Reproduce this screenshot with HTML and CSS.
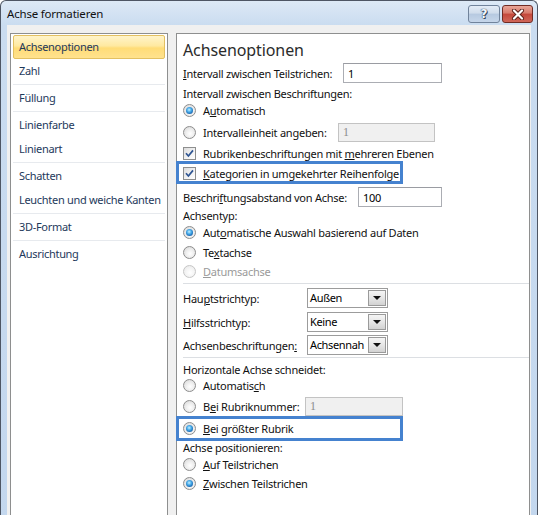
FILE: index.html
```html
<!DOCTYPE html>
<html lang="de">
<head>
<meta charset="utf-8">
<title>Achse formatieren</title>
<link rel="stylesheet" href="styles.css">
</head>
<body>
<div class="window">
  <div class="titlebar">
    <span class="title">Achse formatieren</span>
    <div class="caption-buttons">
      <div class="cb help"><span>?</span></div>
      <div class="cb close">
        <svg width="14" height="11" viewBox="0 0 14 11">
          <path d="M3 1.5 L11 9.5 M11 1.5 L3 9.5" stroke="#5a1f18" stroke-width="4" stroke-linecap="round"/>
          <path d="M3 1.5 L11 9.5 M11 1.5 L3 9.5" stroke="#ffffff" stroke-width="2.2" stroke-linecap="round"/>
        </svg>
      </div>
    </div>
  </div>
  <div class="client">
    <ul class="nav">
      <li class="selected">Achsenoptionen</li>
      <li>Zahl</li>
      <li class="sep"></li>
      <li>Füllung</li>
      <li class="sep"></li>
      <li>Linienfarbe</li>
      <li>Linienart</li>
      <li class="sep"></li>
      <li>Schatten</li>
      <li>Leuchten und weiche Kanten</li>
      <li class="sep"></li>
      <li>3D-Format</li>
      <li class="sep"></li>
      <li>Ausrichtung</li>
    </ul>
    <div class="pane">
      <h1 class="heading">Achsenoptionen</h1>

      <div class="row ctl mt1">
        <span class="label w160"><u>I</u>ntervall zwischen Teilstrichen:</span>
        <div class="field w99">1</div>
      </div>
      <div class="row mt2"><span class="label">Intervall zwischen Beschriftungen:</span></div>
      <div class="row mt1"><span class="radio on"></span><span class="label">A<u>u</u>tomatisch</span></div>
      <div class="row ctl19 mt5">
        <span class="radio"></span><span class="label w135">Intervalleinheit an<u>g</u>eben:</span>
        <div class="field disabled w97">1</div>
      </div>
      <div class="row mt3"><span class="check on"><svg width="11" height="11" viewBox="0 0 11 11"><path d="M2 5.2 L4.4 8 L9 2.4" fill="none" stroke="#2f5592" stroke-width="1.7"/></svg></span><span class="label">Rubrikenbeschriftungen mit <u>m</u>ehreren Ebenen</span></div>
      <div class="row mt4"><span class="check on"><svg width="11" height="11" viewBox="0 0 11 11"><path d="M2 5.2 L4.4 8 L9 2.4" fill="none" stroke="#2f5592" stroke-width="1.7"/></svg></span><span class="label"><u>K</u>ategorien in umgekehrter Reihenfolge</span></div>
      <div class="row ctl mt6">
        <span class="label w175">Beschri<u>f</u>tungsabstand von Achse:</span>
        <div class="field w84">100</div>
      </div>
      <div class="row mt0"><span class="label">Achsentyp:</span></div>
      <div class="row mt1"><span class="radio on"></span><span class="label">Aut<u>o</u>matische Auswahl basierend auf Daten</span></div>
      <div class="row mt4"><span class="radio"></span><span class="label">Te<u>x</u>tachse</span></div>
      <div class="row mt3"><span class="radio disabled"></span><span class="label dim"><u>D</u>atumsachse</span></div>

      <div class="hr mt4"></div>

      <div class="row ctl mt4">
        <span class="label w124">Hau<u>p</u>tstrichtyp:</span>
        <div class="combo"><span class="value">Außen</span><span class="btn"><i class="tri"></i></span></div>
      </div>
      <div class="row ctl mt4">
        <span class="label w124"><u>H</u>ilfsstrichtyp:</span>
        <div class="combo"><span class="value">Keine</span><span class="btn"><i class="tri"></i></span></div>
      </div>
      <div class="row ctl mt3">
        <span class="label w124">Achsenbeschriftungen<u>:</u></span>
        <div class="combo"><span class="value">Achsennah</span><span class="btn"><i class="tri"></i></span></div>
      </div>

      <div class="hr mt2"></div>

      <div class="row mt3"><span class="label">Horizontale Achse schneidet:</span></div>
      <div class="row mt0"><span class="radio"></span><span class="label">Automatis<u>c</u>h</span></div>
      <div class="row ctl19 mt4">
        <span class="radio"></span><span class="label w102">B<u>e</u>i Rubriknummer:</span>
        <div class="field disabled w98">1</div>
      </div>
      <div class="row mt4"><span class="radio on"></span><span class="label"><u>B</u>ei größter Rubrik</span></div>
      <div class="row mt3"><span class="label">Achse positionieren:</span></div>
      <div class="row mt1"><span class="radio"></span><span class="label"><u>A</u>uf Teilstrichen</span></div>
      <div class="row mt3"><span class="radio on"></span><span class="label"><u>Z</u>wischen Teilstrichen</span></div>

      <div class="mark mark-1"></div>
      <div class="mark mark-2"></div>
    </div>
  </div>
</div>
</body>
</html>
```

FILE: styles.css
```css
html, body {
  margin: 0;
  padding: 0;
}
body {
  width: 538px;
  height: 515px;
  overflow: hidden;
  background: #ffffff;
  font-family: "Noto Sans", "Open Sans", sans-serif;
  font-size: 11px;
  letter-spacing: -0.25px;
  color: #000;
}

.window {
  box-sizing: border-box;
  width: 538px;
  height: 540px;
  border: 1px solid #4e5664;
  border-bottom: none;
  border-radius: 6px 6px 0 0;
  background: linear-gradient(180deg, #dde9f6 0, #cadcf0 24px, #c3d7ee 100%);
  padding: 0 6px;
  display: flex;
  flex-direction: column;
}

.titlebar {
  flex: none;
  height: 24px;
  display: flex;
  justify-content: space-between;
  align-items: flex-start;
}
.title {
  font-size: 11.5px;
  letter-spacing: -0.2px;
  line-height: 14px;
  margin-top: 6px;
  color: #111;
}
.caption-buttons {
  display: flex;
  gap: 2px;
  margin-top: 4px;
  margin-right: -2px;
}
.cb {
  box-sizing: border-box;
  height: 18px;
  border-radius: 3px;
  display: flex;
  align-items: center;
  justify-content: center;
}
.help {
  width: 32px;
  border: 1px solid #71839b;
  background: linear-gradient(180deg, #e4ecf6 0, #cfdceb 45%, #b6c9e0 50%, #c6d6ea 100%);
}
.help span {
  font-family: "DejaVu Sans", sans-serif;
  font-weight: bold;
  font-size: 12px;
  letter-spacing: 0;
  color: #f4f7fb;
  text-shadow: 0 0 1px #30405a, 0 0 1px #30405a, 1px 1px 0 #3a4a62;
  line-height: 14px;
}
.close {
  width: 31px;
  border: 1px solid #6f2b23;
  background: linear-gradient(180deg, #e8a597 0, #d7796a 45%, #c4473a 50%, #d06658 100%);
}

.client {
  flex: 1;
  background: #f0f0f0;
  display: grid;
  grid-template-columns: 158px 354px;
  column-gap: 8px;
  padding: 8px 1px 0 3px;
}

/* left navigation list */
.nav {
  list-style: none;
  margin: 0;
  padding: 0 1px;
  border: 1px solid #8e8f8f;
  background: #fff;
  letter-spacing: -0.3px;
}
.nav li {
  box-sizing: border-box;
  height: 24px;
  line-height: 24px;
  padding-left: 7px;
  color: #1e395b;
  white-space: nowrap;
}
.nav li.selected {
  margin: 1px 1px 0;
  padding-left: 5px;
  line-height: 22px;
  border: 1px solid #e3c061;
  border-radius: 2px;
  background: linear-gradient(180deg, #fff4cb 0, #ffe9a0 45%, #ffdc77 55%, #ffe28e 100%);
}
.nav li.sep {
  height: 1px;
  margin: 1px 1px;
  padding: 0;
  background: #e7eaee;
}

/* right pane */
.pane {
  position: relative;
  border: 1px solid #8e8f8f;
  background: #fff;
  padding: 0 0 0 6px;
}
.heading {
  margin: 4px 0 0;
  height: 24px;
  line-height: 24px;
  font-size: 16px;
  letter-spacing: -0.1px;
  font-weight: normal;
  color: #2b2b2b;
}

.row {
  display: flex;
  align-items: center;
  height: 16px;
  white-space: nowrap;
}
.row.ctl { height: 20px; }
.row.ctl19 { height: 19px; }

.mt0 { margin-top: 0; }
.mt1 { margin-top: 1px; }
.mt2 { margin-top: 2px; }
.mt3 { margin-top: 3px; }
.mt4 { margin-top: 4px; }
.mt5 { margin-top: 5px; }
.mt6 { margin-top: 6px; }

.label { flex: none; color: #111; }
.label.dim { color: #9a9a9a; }
u { text-underline-offset: 1px; }

.w160 { width: 160px; }
.w135 { width: 135px; }
.w175 { width: 175px; }
.w124 { width: 124px; }
.w102 { width: 102px; }
.w99 { width: 99px; }
.w97 { width: 97px; }
.w84 { width: 84px; }
.w98 { width: 98px; }

/* radio buttons */
.radio {
  flex: none;
  position: relative;
  box-sizing: border-box;
  width: 13px;
  height: 13px;
  margin-right: 7px;
  border-radius: 50%;
  border: 1px solid #8d8d8d;
  background: radial-gradient(circle at 55% 60%, #ffffff 0, #f2f2f2 35%, #d4d4d4 100%);
}
.radio.on::after {
  content: "";
  position: absolute;
  left: 2px;
  top: 2px;
  width: 7px;
  height: 7px;
  border-radius: 50%;
  background: radial-gradient(circle at 45% 40%, #c9f0ff 0, #4fb1ec 35%, #1b6db8 70%, #0f3f78 100%);
}
.radio.disabled {
  border-color: #c6c6c6;
  background: radial-gradient(circle at 55% 60%, #ffffff 0, #f6f6f6 40%, #e6e6e6 100%);
}

/* checkboxes */
.check {
  flex: none;
  box-sizing: border-box;
  width: 13px;
  height: 13px;
  margin-right: 7px;
  border: 1px solid #8e8f8f;
  background: linear-gradient(135deg, #dcdcdc 0, #f4f4f4 60%, #ffffff 100%);
  display: flex;
  align-items: center;
  justify-content: center;
}
.check svg { display: block; }

/* text fields */
.field {
  flex: none;
  box-sizing: border-box;
  height: 100%;
  border: 1px solid #abadb3;
  border-top-color: #9a9ca2;
  background: #fff;
  padding: 0 4px;
  display: flex;
  align-items: center;
  color: #000;
}
.field.disabled {
  background: #f0f0f0;
  border-color: #c3c3c3;
  color: #8c8c8c;
  font-family: "Liberation Serif", serif;
  font-size: 12px;
}

/* combo boxes */
.combo {
  flex: none;
  box-sizing: border-box;
  width: 81px;
  height: 20px;
  border: 1px solid #9c9c9c;
  background: #fff;
  display: flex;
}
.combo .value {
  flex: 1;
  padding-left: 2px;
  line-height: 18px;
  letter-spacing: -0.35px;
  overflow: hidden;
}
.combo .btn {
  box-sizing: border-box;
  width: 18px;
  margin: 1px;
  border: 1px solid #9a9a9a;
  background: linear-gradient(180deg, #f5f5f5 0, #e6e6e6 50%, #d2d2d2 100%);
  display: flex;
  align-items: center;
  justify-content: center;
}
.tri {
  width: 0;
  height: 0;
  border-left: 4px solid transparent;
  border-right: 4px solid transparent;
  border-top: 4px solid #111;
}

.hr {
  height: 1px;
  background: #dcdfe3;
}

/* annotation highlight boxes */
.mark {
  position: absolute;
  left: -1px;
  width: 227px;
  box-sizing: border-box;
  border: 3px solid #4582cf;
}
.mark-1 { top: 127px; height: 23px; }
.mark-2 { top: 382px; height: 25px; }
```
